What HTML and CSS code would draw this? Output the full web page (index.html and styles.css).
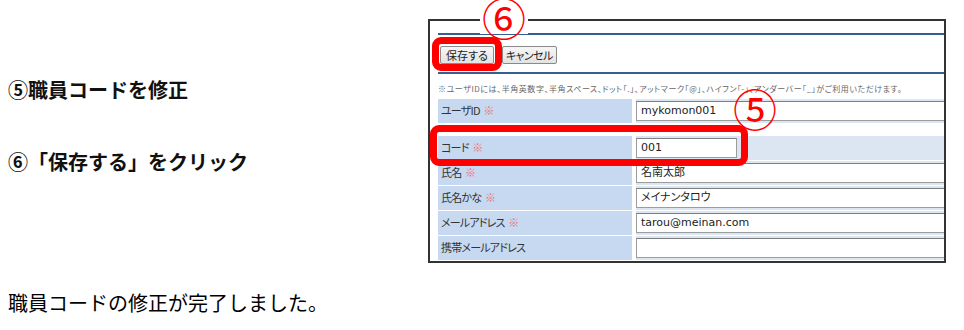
FILE: index.html
```html
<!DOCTYPE html>
<html lang="ja">
<head>
<meta charset="UTF-8">
<title>職員コードの修正</title>
<link rel="stylesheet" href="styles.css">
</head>
<body>
<div class="page">
    <div class="top">
        <div class="steps">
            <p class="step">⑤職員コードを修正</p>
            <p class="step">⑥「保存する」をクリック</p>
        </div>

        <div class="shot-wrap">
            <div class="shot">
                <div class="bar"></div>
                <div class="toolbar">
                    <button class="btn btn-save">保存する</button>
                    <button class="btn btn-cancel">キャンセル</button>
                </div>
                <div class="bar"></div>
                <p class="note">※ユーザIDには、半角英数字、半角スペース、ドット「.」、アットマーク「@」、ハイフン「-」、アンダーバー「_」がご利用いただけます。</p>

                <div class="form">
                    <div class="row">
                        <div class="label">ユーザID <span class="req">※</span></div>
                        <div class="value"><div class="input wide">mykomon001</div></div>
                    </div>
                    <div class="spacer"></div>
                    <div class="row">
                        <div class="label">コード <span class="req">※</span></div>
                        <div class="value"><div class="input short">001</div></div>
                    </div>
                    <div class="row">
                        <div class="label">氏名 <span class="req">※</span></div>
                        <div class="value"><div class="input wide">名南太郎</div></div>
                    </div>
                    <div class="row">
                        <div class="label">氏名かな <span class="req">※</span></div>
                        <div class="value"><div class="input wide">メイナンタロウ</div></div>
                    </div>
                    <div class="row">
                        <div class="label">メールアドレス <span class="req">※</span></div>
                        <div class="value"><div class="input wide">tarou@meinan.com</div></div>
                    </div>
                    <div class="row">
                        <div class="label">携帯メールアドレス</div>
                        <div class="value"><div class="input wide"></div></div>
                    </div>
                    <div class="row">
                        <div class="label"></div>
                        <div class="value"></div>
                    </div>
                </div>
            </div>

            <!-- annotations over the screenshot -->
            <div class="mark mark-save"></div>
            <div class="mark mark-code"></div>
            <span class="num num-6">⑥</span>
            <span class="num num-5">⑤</span>
        </div>
    </div>

    <p class="done">職員コードの修正が完了しました。</p>
</div>
</body>
</html>
```

FILE: styles.css
```css
body {
    margin: 0;
    background: #fff;
    color: #111;
    font-family: "Noto Sans CJK JP", sans-serif;
}
.page {
    width: 964px;
    height: 330px;
    overflow: hidden;
}
.top {
    display: flex;
}
.steps {
    width: 428px;
    padding: 78px 0 0 8px;
    box-sizing: border-box;
    display: flex;
    flex-direction: column;
    gap: 48px;
}
.step {
    margin: 0;
    font-size: 20px;
    line-height: 24px;
    font-weight: 700;
    white-space: nowrap;
}
.done {
    margin: 28px 0 0 8px;
    font-size: 20px;
    line-height: 24px;
    font-weight: 400;
    color: #000;
    white-space: nowrap;
}

/* screenshot frame */
.shot-wrap {
    position: relative;
    margin-top: 19px;
}
.shot {
    width: 518px;
    height: 244px;
    border: 2px solid #333;
    box-sizing: border-box;
    overflow: hidden;
    padding: 12px 0 0 8px;
    font-size: 11px;
    color: #333;
    font-feature-settings: "palt";
}
.bar {
    height: 2px;
    background: #365f91;
}
.toolbar {
    display: flex;
    gap: 8px;
    padding: 11px 0 8px 2px;
}
.btn {
    height: 18px;
    padding: 0 5px;
    margin: 0;
    border: 1px solid #8a8a8a;
    border-radius: 2px;
    background: linear-gradient(#f6f6f6, #e3e3e3);
    font-family: "Noto Sans CJK JP", sans-serif;
    font-feature-settings: "palt";
    font-size: 11px;
    line-height: 16px;
    color: #222;
    white-space: nowrap;
}
.btn-cancel {
    padding: 0 3px;
    letter-spacing: -0.6px;
}
.note {
    margin: 10px 0 0 0;
    font-size: 8px;
    line-height: 10px;
    color: #666;
    white-space: nowrap;
    letter-spacing: 0.55px;
}
.form {
    margin-top: 5px;
    display: flex;
    flex-direction: column;
    gap: 1px;
}
.row {
    display: flex;
    gap: 4px;
    height: 24px;
}
.spacer {
    height: 11px;
}
.label {
    width: 194px;
    flex: none;
    background: #c6d9f0;
    padding-left: 3px;
    box-sizing: border-box;
    line-height: 22px;
    letter-spacing: -0.8px;
    white-space: nowrap;
}
.req {
    color: #f27070;
    margin-left: 2px;
}
.value {
    flex: 1;
    background: #dce6f2;
    padding: 2px 0;
    box-sizing: border-box;
}
.input {
    height: 20px;
    box-sizing: border-box;
    border: 1px solid #9c9c9c;
    border-top-color: #7f7f7f;
    background: #fff;
    padding-left: 4px;
    font-family: "DejaVu Sans", "Noto Sans CJK JP", sans-serif;
    font-size: 11px;
    line-height: 18px;
    color: #222;
    white-space: nowrap;
}
.input.wide {
    width: 340px;
}
.input.short {
    width: 101px;
}

/* red annotation boxes and numbers */
.mark {
    position: absolute;
    border: 7px solid #f00;
    border-radius: 9px;
    box-sizing: border-box;
}
.mark-save {
    left: 4px;
    top: 18px;
    width: 70px;
    height: 34px;
}
.mark-code {
    left: 2px;
    top: 106px;
    width: 318px;
    height: 41px;
}
.num {
    position: absolute;
    font-family: "Noto Sans CJK JP", sans-serif;
    font-size: 44px;
    line-height: 34px;
    color: #f00;
}
.num-6 {
    left: 52px;
    top: -19px;
    padding: 0 2px;
    background: #fff;
}
.num-5 {
    left: 305px;
    top: 72px;
}
```
